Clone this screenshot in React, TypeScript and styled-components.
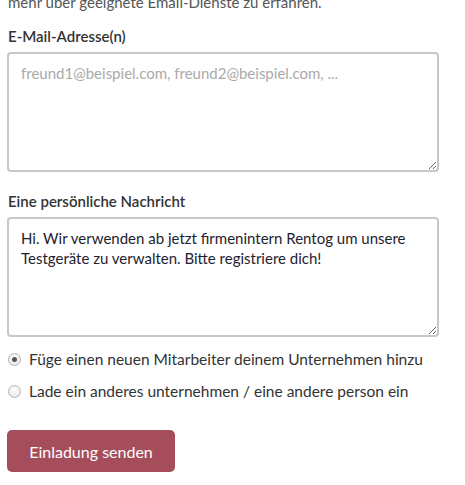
import React from "react";
import styled, { createGlobalStyle } from "styled-components";

const Global = createGlobalStyle`
  html, body { margin: 0; padding: 0; background: #fff; overflow: hidden; }
  body { font-family: "Lato", "Open Sans", sans-serif; color: #333; }
`;

const Page = styled.div`
  padding: 0 26px 0 7px;
  margin-top: -8px;
  display: flex;
  flex-direction: column;
`;

const Intro = styled.p`
  margin: 0 0 0 1px;
  font-size: 15px;
  line-height: 20px;
  color: #555;
`;

const Label = styled.label<{ $first?: boolean }>`
  display: block;
  margin: ${(p) => (p.$first ? "14px" : "19px")} 0 6px 1px;
  font-size: 15px;
  line-height: 20px;
  font-weight: 600;
  color: #333;
`;

const Area = styled.textarea`
  display: block;
  box-sizing: border-box;
  width: 432px;
  height: 120px;
  margin: 0;
  padding: 9px 12px;
  border: 2px solid #c8c8c8;
  border-radius: 4px;
  font-family: "Lato", "Open Sans", sans-serif;
  font-size: 15px;
  line-height: 20px;
  color: #1f2230;
  background: #fff;
  resize: vertical;
  outline: none;
  &::placeholder { color: #aaa; }
`;

const Options = styled.div`
  display: flex;
  flex-direction: column;
  gap: 12px;
  margin-top: 12px;
`;

const Option = styled.label`
  display: flex;
  align-items: center;
  gap: 8px;
  margin-left: 1px;
  font-size: 15.5px;
  line-height: 20px;
  color: #333;
`;

const Radio = styled.input`
  appearance: none;
  -webkit-appearance: none;
  box-sizing: border-box;
  width: 13px;
  height: 13px;
  margin: 0;
  border-radius: 50%;
  border: 1px solid #b4b4b4;
  background: radial-gradient(circle at 50% 35%, #fdfdfd 0%, #e4e4e4 100%);
  display: grid;
  place-items: center;
  &:checked::after {
    content: "";
    width: 5px;
    height: 5px;
    border-radius: 50%;
    background: #555;
  }
`;

const Button = styled.button`
  align-self: flex-start;
  margin-top: 29px;
  width: 168px;
  height: 42px;
  border: none;
  border-radius: 5px;
  background: #a64d5c;
  color: #fff;
  font-family: "Lato", "Open Sans", sans-serif;
  font-size: 16px;
  cursor: pointer;
`;

export default function App() {
  return (
    <>
      <Global />
      <Page>
        <Intro>mehr über geeignete Email-Dienste zu erfahren.</Intro>
        <Label $first>E-Mail-Adresse(n)</Label>
        <Area placeholder="freund1@beispiel.com, freund2@beispiel.com, ..." />
        <Label>Eine persönliche Nachricht</Label>
        <Area defaultValue="Hi. Wir verwenden ab jetzt firmenintern Rentog um unsere Testgeräte zu verwalten. Bitte registriere dich!" />
        <Options>
          <Option>
            <Radio type="radio" name="who" defaultChecked />
            Füge einen neuen Mitarbeiter deinem Unternehmen hinzu
          </Option>
          <Option>
            <Radio type="radio" name="who" />
            Lade ein anderes unternehmen / eine andere person ein
          </Option>
        </Options>
        <Button>Einladung senden</Button>
      </Page>
    </>
  );
}
